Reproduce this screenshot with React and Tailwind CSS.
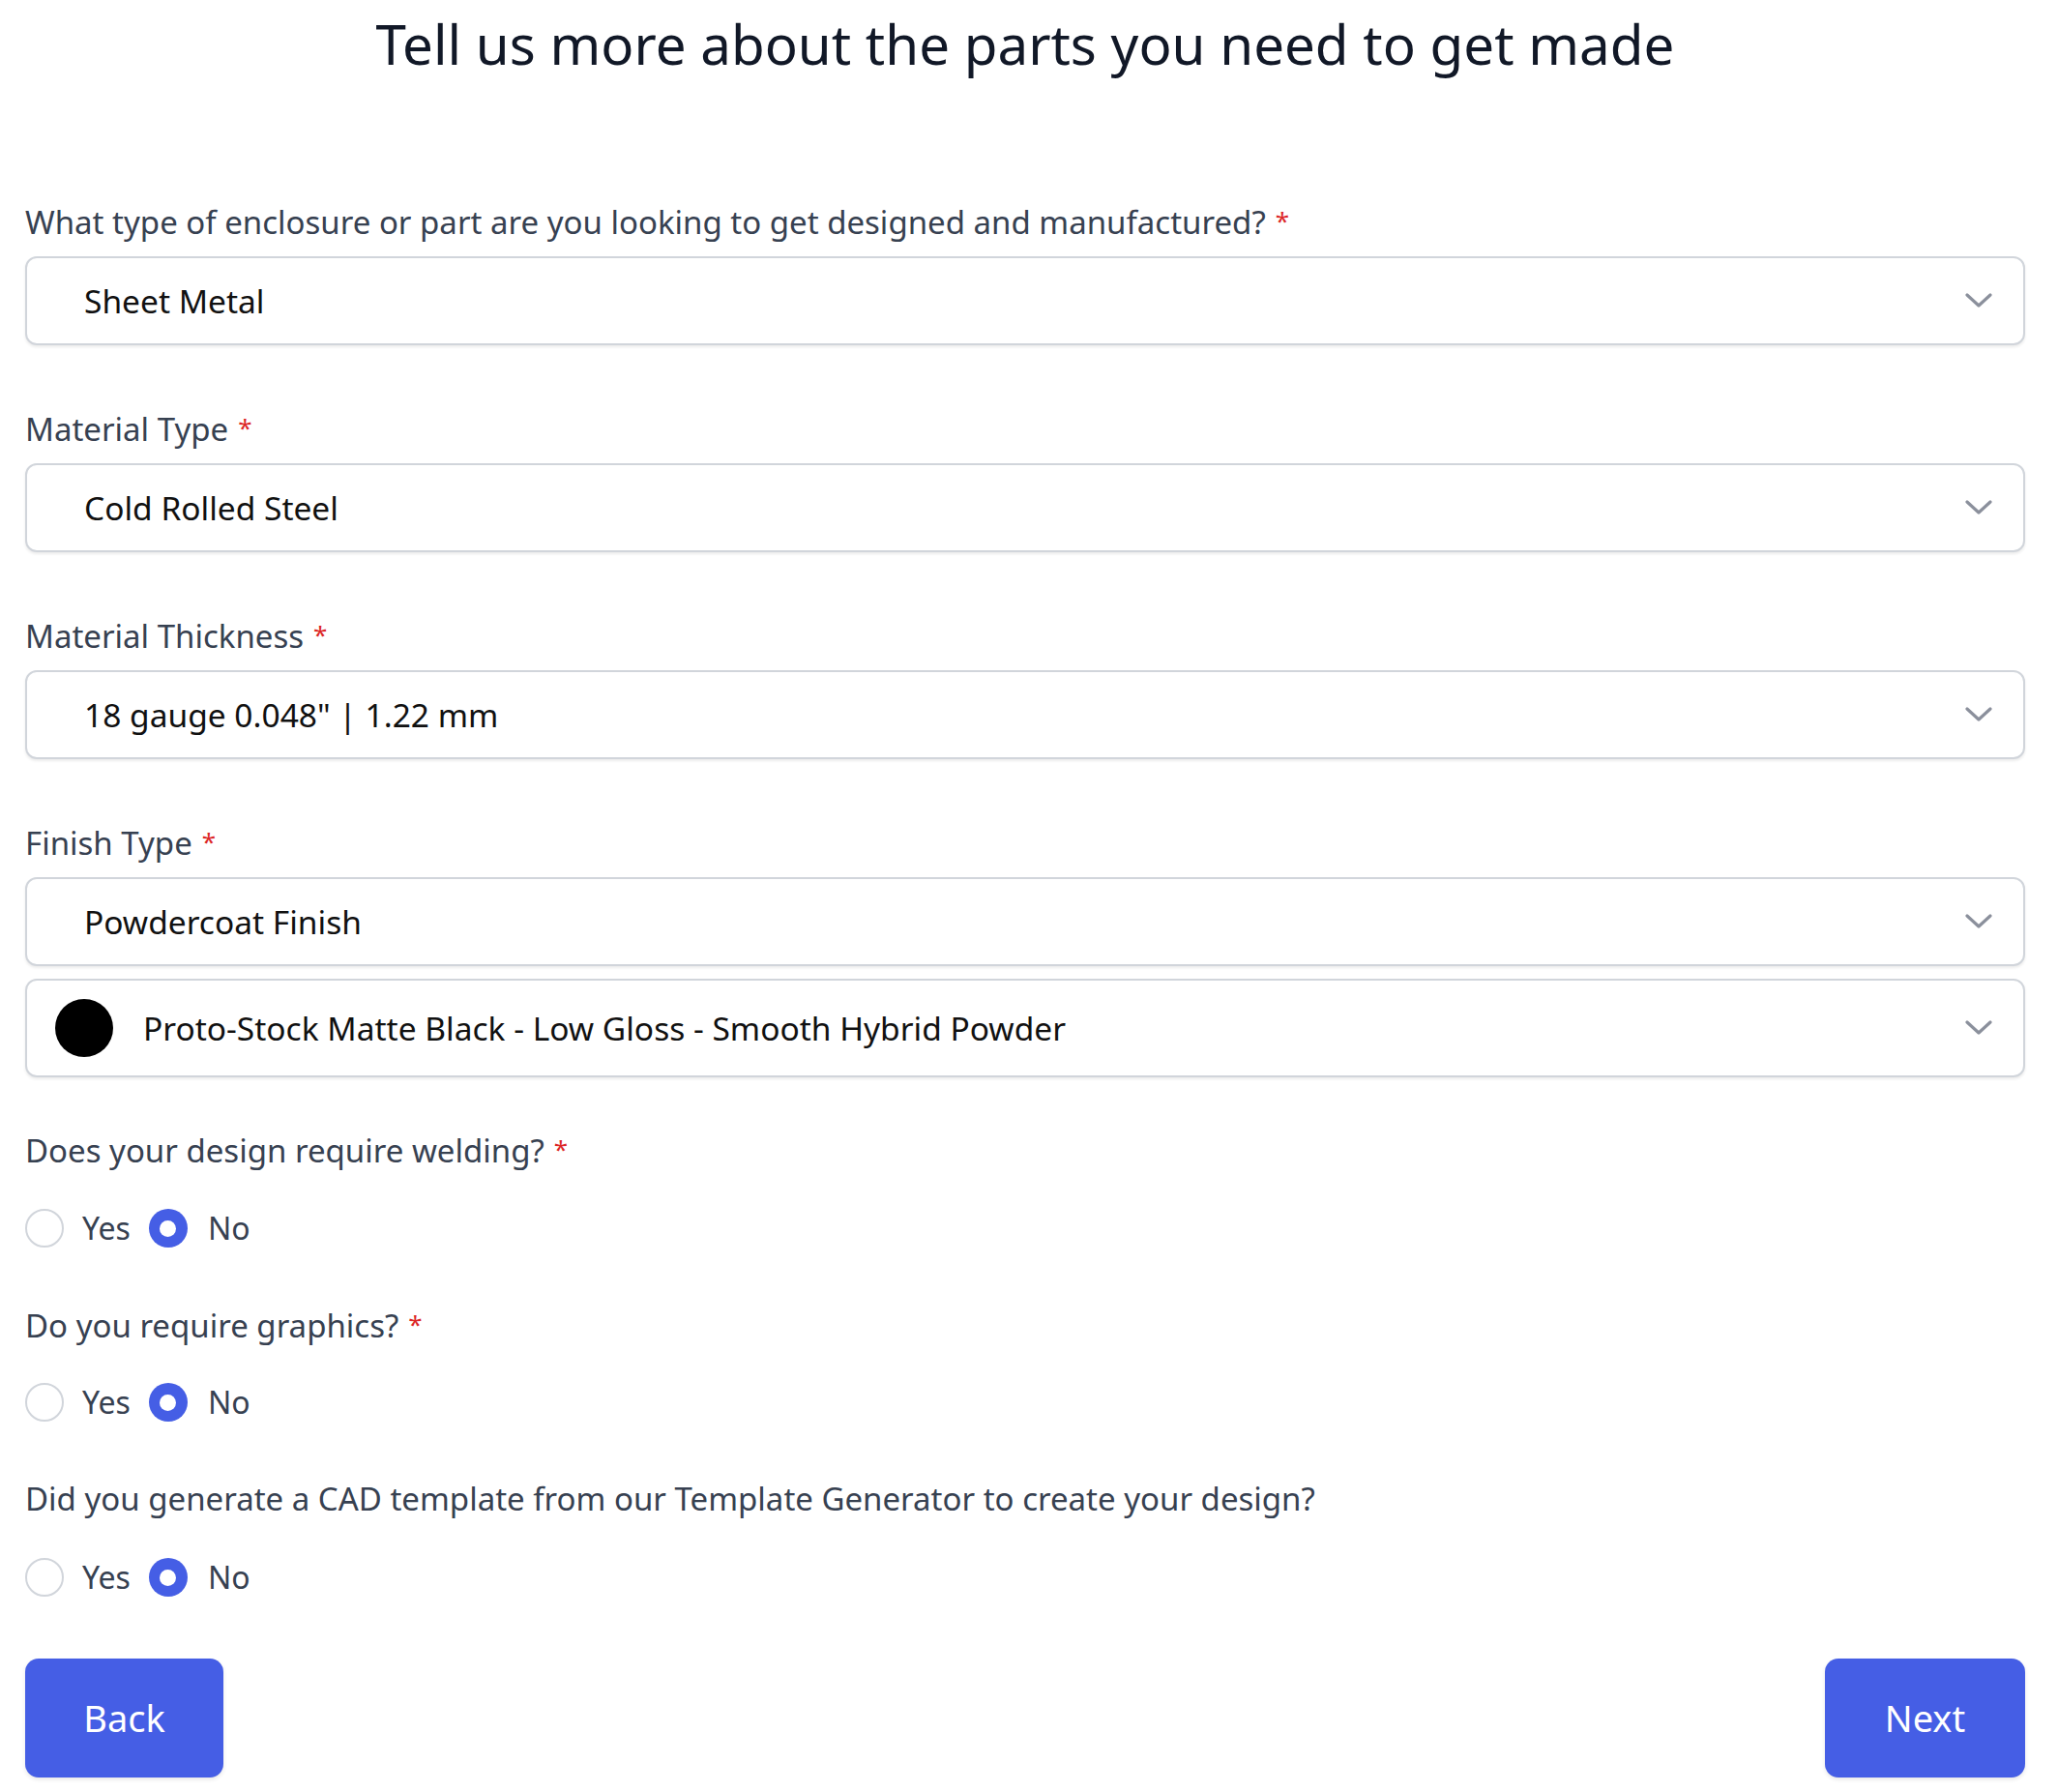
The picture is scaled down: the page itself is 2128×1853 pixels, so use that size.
import React from "react";

const Chevron = () => (
  <svg width="28" height="16" viewBox="0 0 28 16" fill="none" className="shrink-0">
    <path d="M2 2 L14 13 L26 2" stroke="#8b909c" strokeWidth="3.2" strokeLinecap="round" strokeLinejoin="round" />
  </svg>
);

const Star = () => <span className="ml-[10px] text-[26px] text-[#dc2626] align-top relative top-[-2px]">*</span>;

const Label = ({ children, required, className = "" }) => (
  <div className={"h-[48px] leading-[48px] text-[33px] text-[#374151] whitespace-nowrap " + className}>
    {children}
    {required && <Star />}
  </div>
);

const Select = ({ children, className = "" }) => (
  <div
    className={
      "h-[92px] flex items-center justify-between rounded-[12px] border-2 border-[#d1d5db] bg-white shadow-[0_2px_3px_rgba(0,0,0,0.08)] pl-[59px] pr-[32px] " +
      className
    }
  >
    <span className="text-[33.5px] text-[#111111]">{children}</span>
    <Chevron />
  </div>
);

const Radio = ({ checked }) =>
  checked ? (
    <span className="w-[40px] h-[40px] rounded-full bg-[#455ee5] flex items-center justify-center shrink-0">
      <span className="w-[17px] h-[17px] rounded-full bg-white" />
    </span>
  ) : (
    <span className="w-[40px] h-[40px] rounded-full border-2 border-[#d1d5db] bg-white shrink-0" />
  );

const YesNo = ({ className = "" }) => (
  <div className={"h-[48px] flex items-center text-[32px] text-[#374151] " + className}>
    <Radio />
    <span className="ml-[19px]">Yes</span>
    <span className="ml-[19px] flex items-center">
      <Radio checked />
    </span>
    <span className="ml-[21px]">No</span>
  </div>
);

export default function App() {
  return (
    <div
      className="bg-white pl-[26px] pr-[34px] pb-[16px] min-h-[1853px]"
      style={{ fontFamily: '"Noto Sans", "Open Sans", sans-serif' }}
    >
      <h1 className="h-[92px] leading-[92px] text-center text-[56.5px] text-[#111827] whitespace-nowrap">
        Tell us more about the parts you need to get made
      </h1>

      <Label required className="mt-[114px] mb-[11px]">
        What type of enclosure or part are you looking to get designed and manufactured?
      </Label>
      <Select>Sheet Metal</Select>

      <Label required className="mt-[63px] mb-[11px]">Material Type</Label>
      <Select>Cold Rolled Steel</Select>

      <Label required className="mt-[63px] mb-[11px]">Material Thickness</Label>
      <Select>18 gauge 0.048" | 1.22 mm</Select>

      <Label required className="mt-[63px] mb-[11px]">Finish Type</Label>
      <Select>Powdercoat Finish</Select>

      <div className="mt-[13px] h-[102px] flex items-center justify-between rounded-[12px] border-2 border-[#d1d5db] bg-white shadow-[0_2px_3px_rgba(0,0,0,0.08)] pl-[29px] pr-[32px]">
        <div className="flex items-center">
          <span className="w-[60px] h-[60px] rounded-full bg-black shrink-0" />
          <span className="ml-[31px] text-[33.5px] text-[#111111]">
            Proto-Stock Matte Black - Low Gloss - Smooth Hybrid Powder
          </span>
        </div>
        <Chevron />
      </div>

      <Label required className="mt-[52px]">Does your design require welding?</Label>
      <YesNo className="mt-[32px]" />

      <Label required className="mt-[53px]">Do you require graphics?</Label>
      <YesNo className="mt-[31px]" />

      <Label className="mt-[52px]">
        Did you generate a CAD template from our Template Generator to create your design?
      </Label>
      <YesNo className="mt-[33px]" />

      <div className="mt-[60px] flex justify-between">
        <button className="w-[205px] h-[123px] rounded-[14px] bg-[#455ee5] text-white text-[38px] shadow-[0_2px_4px_rgba(0,0,0,0.1)]">
          Back
        </button>
        <button className="w-[207px] h-[123px] rounded-[14px] bg-[#455ee5] text-white text-[38px] shadow-[0_2px_4px_rgba(0,0,0,0.1)]">
          Next
        </button>
      </div>
    </div>
  );
}
